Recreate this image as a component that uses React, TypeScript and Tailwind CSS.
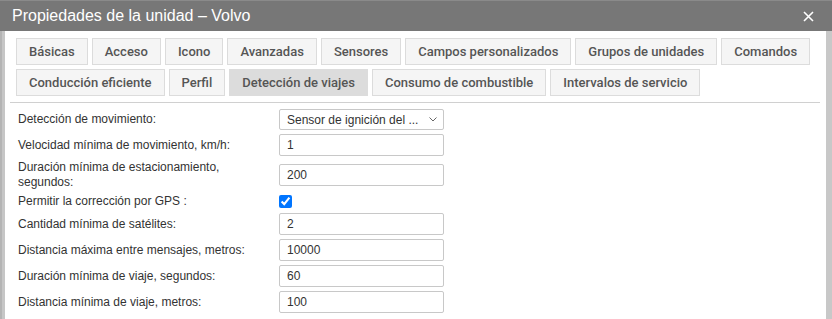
import React from "react";

const tabsRow1 = [
  "Básicas",
  "Acceso",
  "Icono",
  "Avanzadas",
  "Sensores",
  "Campos personalizados",
  "Grupos de unidades",
  "Comandos",
];

const tabsRow2 = [
  "Conducción eficiente",
  "Perfil",
  "Detección de viajes",
  "Consumo de combustible",
  "Intervalos de servicio",
];

const active = "Detección de viajes";

function Tab({ label }: { label: string }) {
  const isActive = label === active;
  return (
    <div
      className={
        "h-[27px] px-[12px] flex items-center border text-[13px] font-medium text-[#555] " +
        (isActive
          ? "bg-[#dcdcdc] border-[#dcdcdc]"
          : "bg-[#f5f5f5] border-[#dcdcdc]")
      }
      style={{ fontFamily: "Roboto, Arial, sans-serif" }}
    >
      {label}
    </div>
  );
}

function Input({ value }: { value: string }) {
  return (
    <div className="w-[165px] h-[22px] border border-[#c8c8c8] rounded-[2px] px-[7px] flex items-center text-[12px] text-[#333]">
      {value}
    </div>
  );
}

function Row({
  label,
  children,
}: {
  label: React.ReactNode;
  children: React.ReactNode;
}) {
  return (
    <div className="flex items-center">
      <div className="w-[261px] text-[12px] leading-[15px] text-[#333]">{label}</div>
      {children}
    </div>
  );
}

export default function App() {
  return (
    <div
      className="w-[832px] h-[319px] overflow-hidden bg-white flex flex-col"
      style={{ fontFamily: '"Liberation Sans", Arial, sans-serif' }}
    >
      {/* header */}
      <div className="h-[31px] shrink-0 bg-[#777777] border-t border-[#8a8a8a] flex items-center justify-between pl-[12px] pr-[18px]">
        <span className="text-[16px] text-white">
          Propiedades de la unidad – Volvo
        </span>
        <svg width="11" height="11" viewBox="0 0 11 11">
          <path d="M1 1L10 10M10 1L1 10" stroke="white" strokeWidth="1.6" />
        </svg>
      </div>

      <div className="flex flex-1 min-h-0">
        <div className="w-[5px] bg-[#c6c6c6] border-l-2 border-[#b4b4b4]" />

        <div className="flex-1 flex flex-col pt-[7px]">
          {/* tabs */}
          <div className="pl-[11px] flex flex-col gap-[4px]">
            <div className="flex gap-[4px]">
              {tabsRow1.map((t) => (
                <Tab key={t} label={t} />
              ))}
            </div>
            <div className="flex gap-[4px]">
              {tabsRow2.map((t) => (
                <Tab key={t} label={t} />
              ))}
            </div>
          </div>

          <div className="mt-[6px] ml-[5px] mr-[6px] border-t border-[#d0d0d0]" />

          {/* form */}
          <div className="pl-[13px] pt-[6px] flex flex-col gap-[4px]">
            <Row label="Detección de movimiento:">
              <div className="w-[165px] h-[21px] border border-[#c8c8c8] rounded-[2px] pl-[7px] pr-[6px] flex items-center justify-between text-[12px] text-[#333] whitespace-nowrap">
                <span>Sensor de ignición del ...</span>
                <svg width="8" height="5" viewBox="0 0 8 5">
                  <path d="M0.5 0.5L4 4L7.5 0.5" stroke="#666" strokeWidth="1" fill="none" />
                </svg>
              </div>
            </Row>
            <Row label="Velocidad mínima de movimiento, km/h:">
              <Input value="1" />
            </Row>
            <Row
              label={
                <>
                  Duración mínima de estacionamiento,
                  <br />
                  segundos:
                </>
              }
            >
              <Input value="200" />
            </Row>
            <Row label="Permitir la corrección por GPS :">
              <input
                type="checkbox"
                defaultChecked
                className="w-[13px] h-[13px] m-0 accent-[#0075ff]"
              />
            </Row>
            <Row label="Cantidad mínima de satélites:">
              <Input value="2" />
            </Row>
            <Row label="Distancia máxima entre mensajes, metros:">
              <Input value="10000" />
            </Row>
            <Row label="Duración mínima de viaje, segundos:">
              <Input value="60" />
            </Row>
            <Row label="Distancia mínima de viaje, metros:">
              <Input value="100" />
            </Row>
          </div>
        </div>

        <div className="w-[6px] bg-[#c8c8c8]" />
      </div>
    </div>
  );
}
